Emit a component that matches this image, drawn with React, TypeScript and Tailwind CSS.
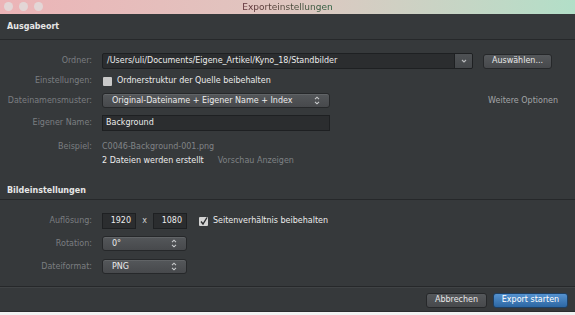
import React from "react";

const font = { fontFamily: '"DejaVu Sans", "Liberation Sans", sans-serif' };

function UpDown() {
  return (
    <svg width="6" height="9" viewBox="0 0 6 9" className="shrink-0">
      <path d="M1 3.2 L3 1.2 L5 3.2" fill="none" stroke="#c9cbcd" strokeWidth="1.1" />
      <path d="M1 5.8 L3 7.8 L5 5.8" fill="none" stroke="#c9cbcd" strokeWidth="1.1" />
    </svg>
  );
}

function Label({ children }: { children: React.ReactNode }) {
  return (
    <div className="w-[92px] shrink-0 text-right text-[8px] text-[#7b7e81] leading-none">{children}</div>
  );
}

function Popup({ text, w }: { text: string; w: string }) {
  return (
    <div
      className={`${w} h-[15px] flex items-center justify-between pl-[9px] pr-[9px] rounded-[3px] border border-[#26282a] bg-gradient-to-b from-[#54575a] to-[#47494c] shadow-[inset_0_1px_0_rgba(255,255,255,0.08)] text-[8px] text-[#ececec]`}
    >
      <span>{text}</span>
      <UpDown />
    </div>
  );
}

export default function App() {
  return (
    <div className="w-[575px] h-[315px] bg-[#f2f2f2] overflow-hidden" style={font}>
      <div className="h-[312px] bg-[#36393b] flex flex-col border-b border-[#2a2c2e]">
        {/* Title bar */}
        <div className="h-[14px] shrink-0 relative flex items-center justify-center bg-gradient-to-r from-[#ecb4b7] via-[#dfc6c0] to-[#b2dfc8]">
          <div className="absolute left-[4px] top-[2px] flex gap-[6px]">
            <div className="w-[9px] h-[9px] rounded-full bg-[#e3d6d6]" />
            <div className="w-[9px] h-[9px] rounded-full bg-[#e3d6d6]" />
            <div className="w-[9px] h-[9px] rounded-full bg-[#e3d6d6]" />
          </div>
          <span className="text-[9px] leading-none text-transparent bg-clip-text bg-gradient-to-r from-[#5e2e36] to-[#245e3e]">
            Exporteinstellungen
          </span>
        </div>

        {/* Ausgabeort header */}
        <div className="h-[26px] shrink-0 flex items-center px-[7px] border-b border-[#26282a] text-[8px] font-bold text-[#e6e6e6]">
          Ausgabeort
        </div>

        {/* Ordner */}
        <div className="mt-[13px] h-[16px] flex items-center gap-[10px]">
          <Label>Ordner:</Label>
          <div className="w-[371px] h-[16px] flex rounded-[2px] border border-[#1e2022] bg-[#2b2d2f] overflow-hidden">
            <div className="flex-1 flex items-center pl-[4px] text-[8px] text-[#ececec]">
              /Users/uli/Documents/Eigene_Artikel/Kyno_18/Standbilder
            </div>
            <div className="w-[18px] flex items-center justify-center border-l border-[#1e2022] bg-gradient-to-b from-[#4e5154] to-[#44474a]">
              <svg width="6" height="4" viewBox="0 0 6 4">
                <path d="M1 1 L3 3 L5 1" fill="none" stroke="#b8babc" strokeWidth="1.1" />
              </svg>
            </div>
          </div>
          <div className="w-[69px] h-[15px] flex items-center justify-center rounded-[3px] border border-[#26282a] bg-gradient-to-b from-[#55585b] to-[#47494c] text-[8px] text-[#e8e8e8]">
            Auswählen...
          </div>
        </div>

        {/* Einstellungen */}
        <div className="mt-[5px] h-[14px] flex items-center gap-[10px]">
          <Label>Einstellungen:</Label>
          <div className="flex items-center gap-[5px]">
            <div className="w-[9px] h-[9px] rounded-[1px] bg-[#c9c9c9] ml-[1px]" />
            <span className="text-[8px] text-[#ececec]">Ordnerstruktur der Quelle beibehalten</span>
          </div>
        </div>

        {/* Dateinamensmuster */}
        <div className="mt-[5px] h-[15px] flex items-center gap-[10px]">
          <Label>Dateinamensmuster:</Label>
          <Popup text="Original-Dateiname + Eigener Name + Index" w="w-[228px]" />
          <div className="flex-1 text-right pr-[17px] text-[8px] text-[#a3a5a7]">Weitere Optionen</div>
        </div>

        {/* Eigener Name */}
        <div className="mt-[7px] h-[16px] flex items-center gap-[10px]">
          <Label>Eigener Name:</Label>
          <div className="w-[228px] h-[16px] flex items-center pl-[3px] border border-[#1e2022] bg-[#2b2d2f] text-[8px] text-[#ececec]">
            Background
          </div>
        </div>

        {/* Beispiel */}
        <div className="mt-[9px] h-[14px] flex items-center gap-[10px]">
          <Label>Beispiel:</Label>
          <span className="text-[8px] text-[#818487]">C0046-Background-001.png</span>
        </div>
        <div className="h-[14px] flex items-center gap-[10px]">
          <div className="w-[92px] shrink-0" />
          <span className="text-[8px] text-[#ececec]">2 Dateien werden erstellt</span>
          <span className="ml-[4px] text-[8px] text-[#7f8285]">Vorschau Anzeigen</span>
        </div>

        {/* Bildeinstellungen header */}
        <div className="h-[32px] shrink-0 flex items-end pb-[2px] px-[7px] border-b border-[#26282a] text-[8px] font-bold text-[#e6e6e6]">
          Bildeinstellungen
        </div>

        {/* Auflösung */}
        <div className="mt-[13px] h-[16px] flex items-center gap-[10px]">
          <Label>Auflösung:</Label>
          <div className="flex items-center">
            <div className="w-[34px] h-[16px] flex items-center justify-end pr-[4px] border border-[#1e2022] bg-[#2b2d2f] text-[8px] text-[#ececec]">
              1920
            </div>
            <span className="w-[17px] text-center text-[8px] text-[#d0d0d0]">x</span>
            <div className="w-[34px] h-[16px] flex items-center justify-end pr-[4px] border border-[#1e2022] bg-[#2b2d2f] text-[8px] text-[#ececec]">
              1080
            </div>
            <div className="ml-[12px] w-[9px] h-[9px] rounded-[1px] bg-[#d4d4d4] flex items-center justify-center">
              <svg width="9" height="9" viewBox="0 0 9 9">
                <path d="M2 4.5 L4 7 L8 0.5" fill="none" stroke="#2a2c2e" strokeWidth="1.4" />
              </svg>
            </div>
            <span className="ml-[5px] text-[8px] text-[#ececec]">Seitenverhältnis beibehalten</span>
          </div>
        </div>

        {/* Rotation */}
        <div className="mt-[7px] h-[15px] flex items-center gap-[10px]">
          <Label>Rotation:</Label>
          <Popup text="0°" w="w-[85px]" />
        </div>

        {/* Dateiformat */}
        <div className="mt-[8px] h-[15px] flex items-center gap-[10px]">
          <Label>Dateiformat:</Label>
          <Popup text="PNG" w="w-[85px]" />
        </div>

        <div className="flex-1" />

        {/* Footer */}
        <div className="h-[25px] shrink-0 border-t border-[#26282a] shadow-[inset_0_1px_0_rgba(255,255,255,0.05)] flex items-center justify-end gap-[6px] pr-[7px] pt-[2px]">
          <div className="w-[61px] h-[15px] flex items-center justify-center rounded-[3px] border border-[#26282a] bg-gradient-to-b from-[#55585b] to-[#47494c] text-[8px] text-[#e8e8e8]">
            Abbrechen
          </div>
          <div className="w-[75px] h-[15px] flex items-center justify-center rounded-[3px] border border-[#1d3f63] bg-gradient-to-b from-[#5592cf] to-[#2c67a3] text-[8px] text-white">
            Export starten
          </div>
        </div>
      </div>
    </div>
  );
}
